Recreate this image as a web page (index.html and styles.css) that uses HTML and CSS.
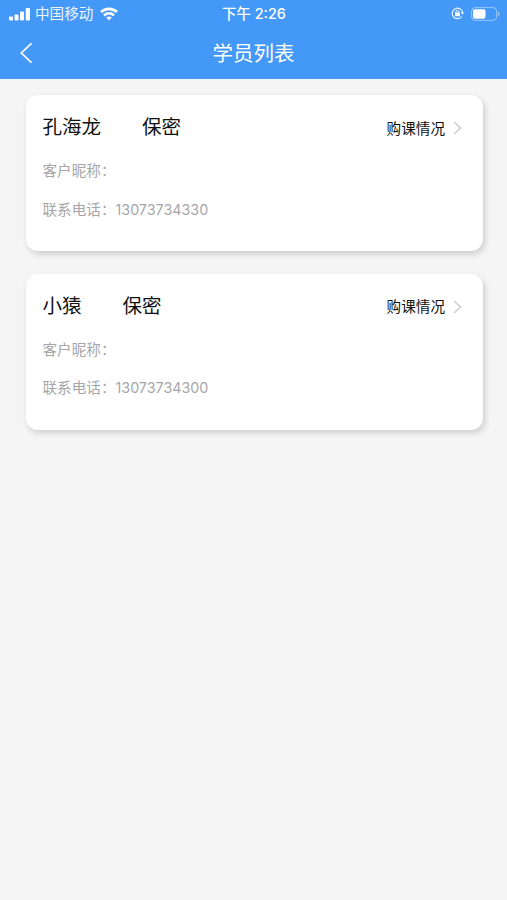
FILE: index.html
```html
<!DOCTYPE html>
<html lang="zh-CN">
<head>
<meta charset="utf-8">
<title>学员列表</title>
<link rel="stylesheet" href="styles.css">
</head>
<body>
<header class="header">
  <div class="status">
    <div class="carrier">
      <svg width="23" height="14" viewBox="0 0 23 14" fill="#fff"><rect x="1" y="9.500" width="4" height="4" rx="1"/><rect x="6.500" y="7.500" width="4" height="6" rx="1"/><rect x="12" y="4.500" width="4" height="9" rx="1"/><rect x="17.700" y="1" width="4.300" height="12.500" rx="1"/></svg>
      <span class="operator">中国移动</span>
      <svg class="wifi" width="18" height="14" viewBox="0 0 18 14" fill="none" stroke="#fff" stroke-width="2.700"><path d="M1 5C5.600 .7 12.400 .7 17 5M4 8.500C7 5.700 11 5.700 14 8.500"/><path d="M6.200 10.600Q9 8.300 11.800 10.600L9 13.400Z" fill="#fff" stroke="none"/></svg>
    </div>
    <div class="time">下午 2:26</div>
    <div class="power">
      <svg width="13" height="13" viewBox="0 0 13 13" fill="none" stroke="#fff" stroke-opacity=".9" stroke-width="1.200"><path d="M10.700 9.500A5.200 5.200 0 1 1 11.600 5.500"/><path d="M9.800 5.300h3.200l-1.400 2.400z" fill="#fff" stroke="none"/><path d="M4.900 6V4.900a1.500 1.500 0 0 1 3 0V6" stroke-width="1"/><rect x="4" y="5.500" width="4.800" height="3.700" rx=".5" fill="#fff" stroke="none"/></svg>
      <svg width="29" height="14" viewBox="0 0 29 14"><rect x=".6" y=".6" width="25" height="12.800" rx="3.500" fill="none" stroke="#fff" stroke-opacity=".45"/><rect x="2" y="2.300" width="12.500" height="9.400" rx="2" fill="#fff"/><path d="M27 4.500q3 2.500 0 5z" fill="#fff" opacity=".5"/></svg>
    </div>
  </div>
  <nav class="nav">
    <svg class="back" width="14" height="22" viewBox="0 0 14 22" fill="none" stroke="#fff" stroke-width="1.700"><path d="M12.500 1.300 2.300 11l10.200 9.700"/></svg>
    <h1 class="title">学员列表</h1>
  </nav>
</header>
<main class="list">
  <article class="card">
    <div class="top"><div class="who"><span>孔海龙</span><span>保密</span></div><div class="more"><span>购课情况</span><svg class="arrow" width="9" height="14" viewBox="0 0 9 14" fill="none" stroke="#cfcfd1" stroke-width="1.700"><path d="m1 1 6.500 6L1 13"/></svg></div></div>
    <p class="row"><span>客户昵称</span><span class="colon">：</span></p>
    <p class="row"><span>联系电话</span><span class="colon">：</span><span class="phone">13073734330</span></p>
  </article>
  <article class="card">
    <div class="top"><div class="who"><span>小猿</span><span>保密</span></div><div class="more"><span>购课情况</span><svg class="arrow" width="9" height="14" viewBox="0 0 9 14" fill="none" stroke="#cfcfd1" stroke-width="1.700"><path d="m1 1 6.500 6L1 13"/></svg></div></div>
    <p class="row"><span>客户昵称</span><span class="colon">：</span></p>
    <p class="row"><span>联系电话</span><span class="colon">：</span><span class="phone">13073734300</span></p>
  </article>
</main>
</body>
</html>
```
FILE: styles.css
```css
* { box-sizing: border-box; margin: 0; padding: 0; }
body { min-height: 100vh; background: #f5f5f5; color: #111; font-family: Inter, "Noto Sans CJK SC", sans-serif; }
svg { display: block; flex: none; }
.header { height: 79px; background: #4498f7; color: #fff; }
.status { height: 27px; padding: 0 7px 0 8px; display: grid; grid-template-columns: 1fr auto 1fr; align-items: center; font-size: 14.6px; line-height: 27px; }
.carrier { display: flex; align-items: center; gap: 4px; white-space: nowrap; }
.operator { padding-top: 2px; line-height: 25px; opacity: .9; }
.wifi { margin-left: 3px; }
.time { font-size: 14.4px; font-weight: 500; }
.power { display: flex; align-items: center; justify-content: flex-end; gap: 7px; }
.nav { height: 52px; display: grid; grid-template-columns: 40px 1fr 40px; align-items: center; }
.back { margin-left: 19px; }
.title { padding-top: 1px; text-align: center; font-size: 20.5px; font-weight: 400; line-height: 50px; }
.list { padding: 16px 24px 20px 26px; display: grid; gap: 22.5px; }
.card { height: 156px; padding: 13px 21px 0 16.5px; background: #fff; border-radius: 12px; box-shadow: 2px 3px 6px rgba(0, 0, 0, .17); }
.top { height: 38px; display: flex; justify-content: space-between; }
.who { display: flex; gap: 41px; font-size: 19.5px; line-height: 38px; }
.more { display: flex; align-items: center; gap: 8px; font-size: 14.6px; }
.arrow { margin-top: 2px; }
.row { height: 38.5px; display: flex; font-size: 14.6px; line-height: 51px; color: #a6a6a8; }
.colon { width: 14.6px; }
.phone { font-size: 14.3px; line-height: 49px; }
```
